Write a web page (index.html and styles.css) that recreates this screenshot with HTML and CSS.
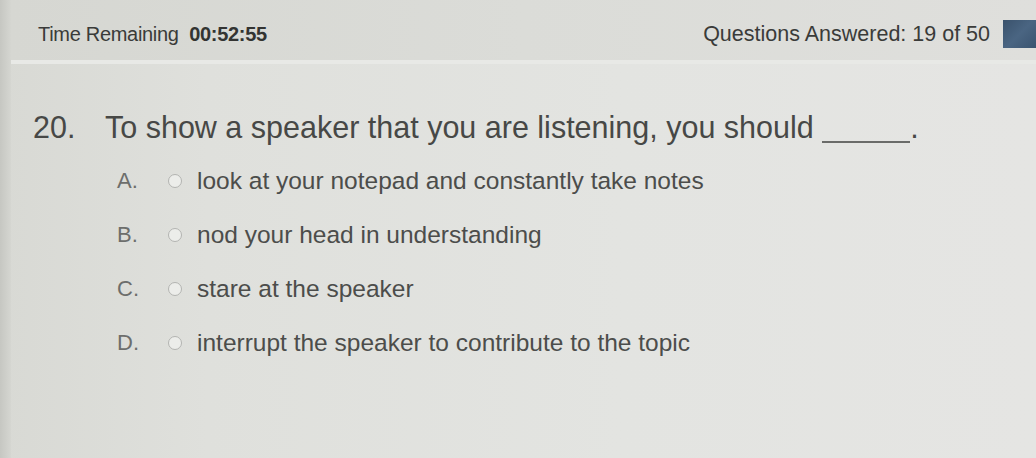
FILE: index.html
```html
<!DOCTYPE html>
<html>
<head>
<meta charset="utf-8">
<link rel="stylesheet" href="styles.css">
</head>
<body>
<div class="screen">
  <div class="edge"></div>
  <div class="main">
    <header class="topbar">
      <div class="timer">Time Remaining&nbsp; <span class="clock">00:52:55</span></div>
      <div class="progress">
        <span>Questions Answered: 19 of 50</span>
        <span class="chip"></span>
      </div>
    </header>
    <section class="question">
      <div class="qline">
        <span class="qnum">20.</span>
        <span class="qtext">To show a speaker that you are listening, you should <span class="blank"></span>.</span>
      </div>
      <ul class="options">
        <li class="opt"><span class="letter">A.</span><span class="radio"></span><span class="otext">look at your notepad and constantly take notes</span></li>
        <li class="opt"><span class="letter">B.</span><span class="radio"></span><span class="otext">nod your head in understanding</span></li>
        <li class="opt"><span class="letter">C.</span><span class="radio"></span><span class="otext">stare at the speaker</span></li>
        <li class="opt"><span class="letter">D.</span><span class="radio"></span><span class="otext">interrupt the speaker to contribute to the topic</span></li>
      </ul>
    </section>
  </div>
</div>
</body>
</html>
```

FILE: styles.css
```css
html, body {
  margin: 0;
  padding: 0;
}
body {
  width: 1036px;
  height: 458px;
  overflow: hidden;
  font-family: "Liberation Sans", Arial, sans-serif;
  background: #e2e3df;
}
.screen {
  display: flex;
  height: 458px;
  background: linear-gradient(90deg, #d8d9d4 0%, #dfe0dc 20%, #e3e4e1 60%, #e5e5e3 100%);
}
.edge {
  width: 11px;
  background: linear-gradient(90deg, #c6c7c2, #d5d6d1);
}
.main {
  flex: 1;
  display: flex;
  flex-direction: column;
}
.topbar {
  height: 64px;
  box-sizing: border-box;
  display: flex;
  justify-content: space-between;
  align-items: center;
  padding: 10px 0 2px 27px;
  background: linear-gradient(90deg, #d6d7d2, #dbdcd8 50%, #dfdfdc);
  border-bottom: 4px solid #e8e9e6;
  color: #3a3b39;
}
.timer {
  font-size: 20px;
  letter-spacing: -0.3px;
}
.clock {
  font-weight: bold;
  color: #333432;
  letter-spacing: -0.3px;
}
.progress {
  display: flex;
  align-items: center;
  gap: 13px;
  font-size: 21.5px;
}
.chip {
  width: 33px;
  height: 28px;
  background: linear-gradient(135deg, #3a526c 0%, #4a6582 50%, #3a5470 100%);
}
.question {
  padding: 46px 0 0 22px;
}
.qline {
  display: flex;
  align-items: baseline;
  color: #474846;
  font-size: 30.5px;
  line-height: 34px;
}
.qnum {
  width: 72px;
}
.blank {
  display: inline-block;
  width: 88px;
  border-bottom: 2px solid #6a6b69;
  margin-left: 0;
  vertical-align: -5px;
}
.options {
  list-style: none;
  margin: 23px 0 0 0;
  padding: 0 0 0 84px;
  display: flex;
  flex-direction: column;
  gap: 26px;
}
.opt {
  display: flex;
  align-items: center;
  height: 28px;
  line-height: 28px;
  font-size: 24.5px;
  color: #4c4d4b;
}
.letter {
  width: 51px;
  color: #6d6e6c;
  font-size: 22px;
}
.radio {
  width: 12px;
  height: 12px;
  border: 1px solid #b3b4b1;
  border-radius: 50%;
  background: #ecedea;
  margin-right: 15px;
}
```
